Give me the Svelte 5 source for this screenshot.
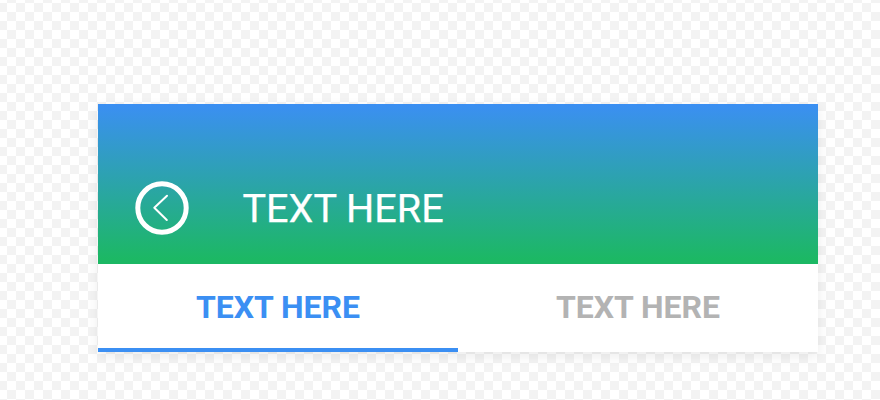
<script>
  let tabs = ["TEXT HERE", "TEXT HERE"];
  let active = $state(0);
</script>

<main class="page">
  <section class="card">
    <header class="top">
      <button class="back" aria-label="Back">
        <svg width="54" height="54" viewBox="0 0 54 54" fill="none" stroke="#fff">
          <circle cx="27" cy="27" r="24.2" stroke-width="5" />
          <path d="M32 14.7 L19.3 26.8 L31.8 39" stroke-width="2" stroke-linecap="round" stroke-linejoin="round" />
        </svg>
      </button>
      <h1>TEXT HERE</h1>
    </header>
    <nav class="tabs">
      {#each tabs as tab, i}
        <button class="tab" class:active={active === i} onclick={() => (active = i)}>{tab}</button>
      {/each}
    </nav>
  </section>
</main>

<style>
  :global(body) {
    margin: 0;
  }

  .page {
    width: 880px;
    height: 400px;
    box-sizing: border-box;
    padding: 104px 62px 0 98px;
    overflow: hidden;
    background-color: #fff;
    background-image: conic-gradient(#f3f3f3 25%, #fff 0 50%, #f3f3f3 0 75%, #fff 0);
    background-size: 18px 18px;
    background-position: 7px 3px;
  }

  .card {
    width: 720px;
    box-shadow: 0 4px 12px rgba(0, 0, 0, 0.08);
  }

  .top {
    height: 160px;
    box-sizing: border-box;
    padding: 77px 0 0 37px;
    display: flex;
    align-items: flex-start;
    background: linear-gradient(#3b8ff3, #1cb864 97%);
  }

  .back {
    width: 54px;
    height: 54px;
    padding: 0;
    border: 0;
    background: none;
    display: block;
  }

  h1 {
    margin: 1px 0 0 53.5px;
    font: 400 39.6px/54px Roboto, sans-serif;
    color: #fff;
    -webkit-text-stroke: 0.25px #fff;
  }

  .tabs {
    display: flex;
    background: #fff;
  }

  .tab {
    flex: 1;
    height: 88px;
    padding: 1px 0 0;
    border: 0;
    border-bottom: 4px solid transparent;
    background: none;
    font: 700 32px Roboto, sans-serif;
    color: #b3b3b3;
  }

  .tab.active {
    color: #3b8ff3;
    border-bottom-color: #3b8ff3;
  }
</style>
